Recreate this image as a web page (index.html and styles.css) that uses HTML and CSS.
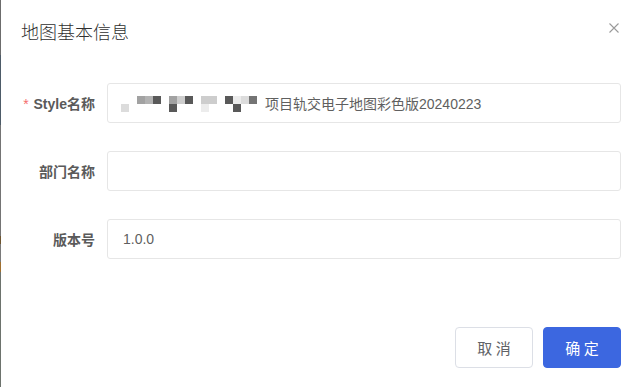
FILE: index.html
```html
<!DOCTYPE html>
<html lang="zh">
<head>
<meta charset="utf-8">
<link rel="stylesheet" href="styles.css">
</head>
<body>
<div class="page">
  <div class="edge"></div>
  <div class="dialog">
    <div class="dialog-header">
      <span class="dialog-title">地图基本信息</span>
      <svg class="close" width="10" height="10" viewBox="0 0 10 10"><path d="M0.5 0.5 L9.5 9.5 M9.5 0.5 L0.5 9.5" stroke="#9a9a9a" stroke-width="1.1" fill="none"/></svg>
    </div>
    <div class="dialog-body">
      <div class="form-item">
        <label class="form-label"><span class="req">*</span> Style名称</label>
        <div class="input">
          <span class="mosaic">
            <i></i><i></i><i class="s2"></i><i class="s3"></i><i class="s9"></i><i></i><i class="s2"></i><i class="s5"></i><i class="s9"></i><i></i><i class="s5"></i><i class="s5"></i><i></i><i class="s9"></i><i class="s7"></i><i class="s6"></i><i class="s8"></i><i></i>
            <i class="s6"></i><i></i><i></i><i></i><i></i><i></i><i class="s9"></i><i></i><i></i><i></i><i class="s7"></i><i></i><i></i><i></i><i class="s9"></i><i></i><i></i><i></i>
          </span><span class="val">项目轨交电子地图彩色版20240223</span>
        </div>
      </div>
      <div class="form-item">
        <label class="form-label">部门名称</label>
        <div class="input"></div>
      </div>
      <div class="form-item">
        <label class="form-label">版本号</label>
        <div class="input"><span class="val">1.0.0</span></div>
      </div>
    </div>
    <div class="dialog-footer">
      <button class="btn btn-default">取 消</button>
      <button class="btn btn-primary">确 定</button>
    </div>
  </div>
</div>
</body>
</html>
```
FILE: styles.css
```css
* { box-sizing: border-box; }
html, body { margin: 0; padding: 0; background: #fff; }
body {
  width: 640px;
  height: 387px;
  overflow: hidden;
  font-family: "Liberation Sans", "Noto Sans CJK SC", sans-serif;
}
.page {
  display: flex;
  height: 387px;
}
.edge {
  width: 1px;
  flex: none;
  background: linear-gradient(to bottom,
    #6c6c6c 0, #6c6c6c 55px,
    #4d5b68 55px, #4d5b68 125px,
    #747474 125px, #747474 236px,
    #6e5530 236px, #6e5530 244px,
    #7a7a7a 244px, #7a7a7a 262px,
    #a07030 262px, #a07030 272px,
    #6d736d 272px, #6d736d 387px);
}
.dialog {
  flex: 1;
  display: flex;
  flex-direction: column;
}
.dialog-header {
  display: flex;
  align-items: center;
  justify-content: space-between;
  padding: 20px 21px 0 20px;
  height: 42px;
}
.dialog-title {
  font-family: "Noto Sans CJK SC", sans-serif;
  font-size: 18px;
  font-weight: 300;
  line-height: 22px;
  color: #303030;
}
.close {
  display: block;
  margin-top: -6px;
}
.dialog-body {
  padding: 41px 19px 0 0;
}
.form-item {
  display: flex;
  align-items: center;
  height: 40px;
  margin-bottom: 28px;
}
.form-label {
  width: 106px;
  flex: none;
  padding-right: 12px;
  text-align: right;
  font-size: 14px;
  font-weight: bold;
  color: #5a5a5a;
  font-family: "Liberation Sans", "Noto Sans CJK SC", sans-serif;
}
.req {
  color: #f56c6c;
  font-weight: normal;
  margin-right: 1px;
}
.input {
  flex: 1;
  height: 40px;
  border: 1px solid #e6e6e6;
  border-radius: 3px;
  display: flex;
  align-items: center;
  padding-left: 13px;
  font-size: 14px;
  color: #606266;
}
.val {
  font-family: "Liberation Sans", "Noto Sans CJK SC", sans-serif;
  color: #5f5f5f;
}
.form-item:last-child .val { padding-left: 2px; }
.mosaic {
  display: grid;
  grid-template-columns: repeat(18, 8px);
  grid-template-rows: 8px 8px;
  width: 144px;
  flex: none;
  margin-top: 2px;
}
.mosaic i { display: block; }
.mosaic .s2 { background: #a2a2a2; }
.mosaic .s3 { background: #b2b2b2; }
.mosaic .s5 { background: #cdcdcd; }
.mosaic .s6 { background: #dcdcdc; }
.mosaic .s7 { background: #ececec; }
.mosaic .s8 { background: #747474; }
.mosaic .s9 { background: #595959; }
.dialog-footer {
  display: flex;
  justify-content: flex-end;
  gap: 10px;
  padding: 40px 19px 0 0;
}
.btn {
  height: 41px;
  width: 78px;
  border-radius: 4px;
  font-size: 15px;
  font-family: "Noto Sans CJK SC", sans-serif;
  cursor: pointer;
  padding: 0;
}
.btn-default {
  background: #fff;
  border: 1px solid #dcdfe6;
  color: #606266;
}
.btn-primary {
  background: #3c67e0;
  border: 1px solid #3c67e0;
  color: #fff;
}
```
